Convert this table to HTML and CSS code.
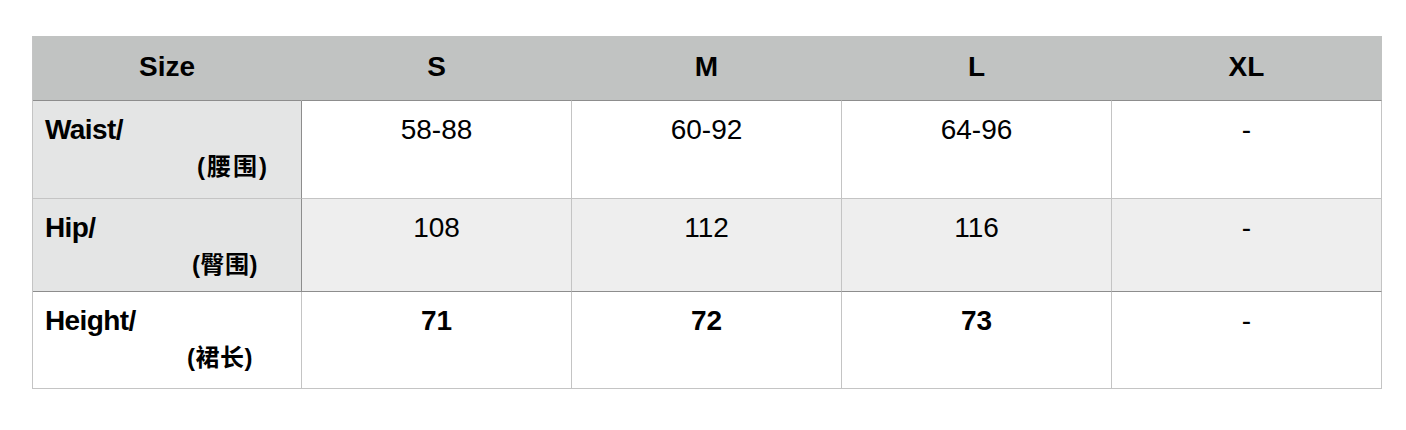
FILE: index.html
```html
<!DOCTYPE html>
<html lang="zh">
<head>
<meta charset="utf-8">
<title>Size chart</title>
<link rel="stylesheet" href="styles.css">
</head>
<body>
<div class="chart">
  <div class="cell head">Size</div>
  <div class="cell head">S</div>
  <div class="cell head">M</div>
  <div class="cell head">L</div>
  <div class="cell head">XL</div>

  <div class="cell label r1 dark-right"><span class="en">Waist/</span><span class="zh zh-1">(腰围)</span></div>
  <div class="cell val r1">58-88</div>
  <div class="cell val r1">60-92</div>
  <div class="cell val r1">64-96</div>
  <div class="cell val r1">-</div>

  <div class="cell label r2 dark-right dark-bottom"><span class="en">Hip/</span><span class="zh zh-2">(臀围)</span></div>
  <div class="cell val r2 alt dark-bottom">108</div>
  <div class="cell val r2 alt dark-bottom">112</div>
  <div class="cell val r2 alt dark-bottom">116</div>
  <div class="cell val r2 alt dark-bottom">-</div>

  <div class="cell label-plain r3"><span class="en">Height/</span><span class="zh zh-3">(裙长)</span></div>
  <div class="cell val r3 strong">71</div>
  <div class="cell val r3 strong">72</div>
  <div class="cell val r3 strong">73</div>
  <div class="cell val r3">-</div>
</div>
</body>
</html>
```

FILE: styles.css
```css
* { box-sizing: border-box; }

html, body {
  margin: 0;
  padding: 0;
  background: #ffffff;
}

body {
  font-family: "Liberation Sans", Arial, "Noto Sans CJK SC", sans-serif;
  color: #000;
}

.chart {
  display: grid;
  grid-template-columns: 269px 270px 270px 270px 270px;
  width: 1350px;
  margin: 36px 0 0 32px;
  border-left: 1px solid #c4c4c4;
}

.cell {
  border-right: 1px solid #c4c4c4;
  border-bottom: 1px solid #c4c4c4;
  font-size: 28px;
  line-height: 34px;
}

.head {
  height: 65px;
  background: #c1c3c2;
  border-right-color: #c1c3c2;
  border-bottom-color: #8d8d8d;
  font-weight: 700;
  display: flex;
  align-items: center;
  justify-content: center;
  padding-bottom: 3px;
}

.r1 { height: 98px; }
.r2 { height: 93px; }
.r3 { height: 97px; }

.label,
.label-plain {
  padding: 12px 0 0 12px;
  display: flex;
  flex-direction: column;
  align-items: flex-start;
}

.label { background: #e4e5e5; }

.dark-right { border-right-color: #8d8d8d; }
.dark-bottom { border-bottom-color: #8d8d8d; }

.en {
  font-weight: 700;
  letter-spacing: -0.6px;
}

.zh {
  font-family: "Liberation Sans", "Noto Sans CJK SC", sans-serif;
  font-weight: 700;
  font-size: 24px;
  line-height: 35px;
  margin-top: 2px;
}

.zh-1 { margin-left: 152px; letter-spacing: 2px; }
.zh-2 { margin-left: 147px; letter-spacing: 0.5px; }
.zh-3 { margin-left: 142px; letter-spacing: 0.5px; }

.val {
  padding-top: 12px;
  text-align: center;
}

.alt { background: #eeeeee; }

.strong { font-weight: 700; }
```
